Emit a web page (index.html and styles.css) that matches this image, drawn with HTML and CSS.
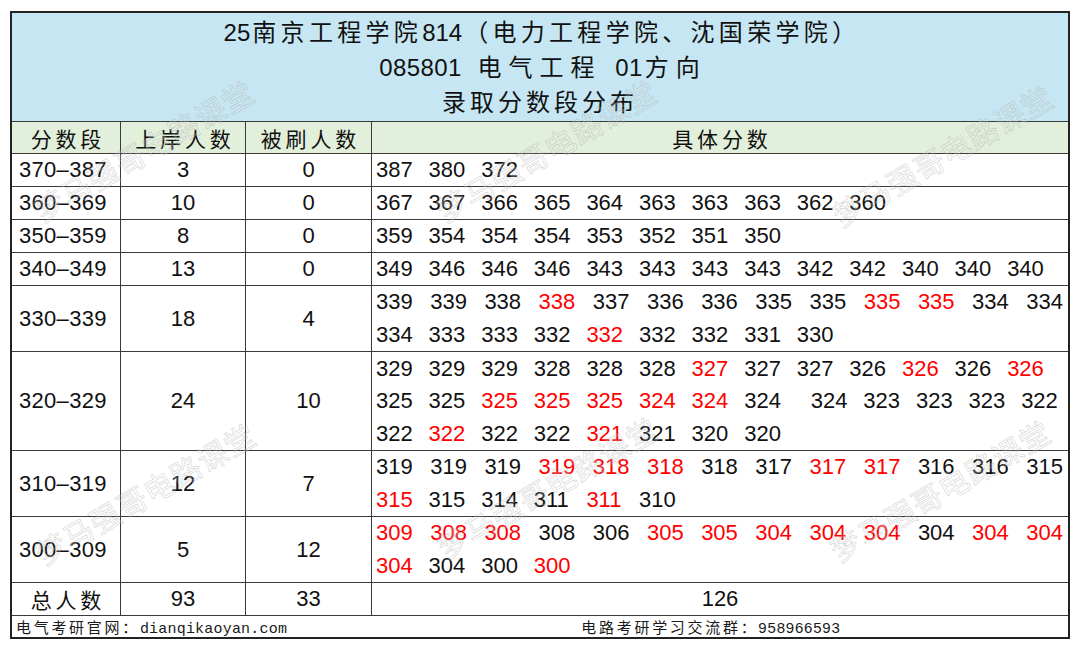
FILE: index.html
```html
<!DOCTYPE html>
<html lang="zh">
<head>
<meta charset="utf-8">
<title>录取分数段分布</title>
<link rel="stylesheet" href="styles.css">
</head>
<body>
<div class="page">
  <div class="sheet">
    <div class="cell title">
      <div class="t1"><span class="d">25</span>南京工程学院<span class="d">814</span>（电力工程学院、沈国荣学院）</div>
      <div class="t2"><span class="d">085801</span> 电气工程 <span class="d">01</span>方向</div>
      <div class="t3">录取分数段分布</div>
    </div>

    <div class="cell hd">分数段</div>
    <div class="cell hd">上岸人数</div>
    <div class="cell hd">被刷人数</div>
    <div class="cell hd">具体分数</div>

    <div class="cell rng">370–387</div>
    <div class="cell ctr">3</div>
    <div class="cell ctr">0</div>
    <div class="cell nums">
      <div class="ln"><span>387</span><span>380</span><span>372</span></div>
    </div>

    <div class="cell rng">360–369</div>
    <div class="cell ctr">10</div>
    <div class="cell ctr">0</div>
    <div class="cell nums">
      <div class="ln"><span>367</span><span>367</span><span>366</span><span>365</span><span>364</span><span>363</span><span>363</span><span>363</span><span>362</span><span>360</span></div>
    </div>

    <div class="cell rng">350–359</div>
    <div class="cell ctr">8</div>
    <div class="cell ctr">0</div>
    <div class="cell nums">
      <div class="ln"><span>359</span><span>354</span><span>354</span><span>354</span><span>353</span><span>352</span><span>351</span><span>350</span></div>
    </div>

    <div class="cell rng">340–349</div>
    <div class="cell ctr">13</div>
    <div class="cell ctr">0</div>
    <div class="cell nums">
      <div class="ln"><span>349</span><span>346</span><span>346</span><span>346</span><span>343</span><span>343</span><span>343</span><span>343</span><span>342</span><span>342</span><span>340</span><span>340</span><span>340</span></div>
    </div>

    <div class="cell rng">330–339</div>
    <div class="cell ctr">18</div>
    <div class="cell ctr">4</div>
    <div class="cell nums">
      <div class="ln w"><span>339</span><span>339</span><span>338</span><span class="r">338</span><span>337</span><span>336</span><span>336</span><span>335</span><span>335</span><span class="r">335</span><span class="r">335</span><span>334</span><span>334</span></div>
      <div class="ln"><span>334</span><span>333</span><span>333</span><span>332</span><span class="r">332</span><span>332</span><span>332</span><span>331</span><span>330</span></div>
    </div>

    <div class="cell rng">320–329</div>
    <div class="cell ctr">24</div>
    <div class="cell ctr">10</div>
    <div class="cell nums">
      <div class="ln"><span>329</span><span>329</span><span>329</span><span>328</span><span>328</span><span>328</span><span class="r">327</span><span>327</span><span>327</span><span>326</span><span class="r">326</span><span>326</span><span class="r">326</span></div>
      <div class="ln"><span>325</span><span>325</span><span class="r">325</span><span class="r">325</span><span class="r">325</span><span class="r">324</span><span class="r">324</span><span>324</span><span class="xs">324</span><span>323</span><span>323</span><span>323</span><span>322</span></div>
      <div class="ln"><span>322</span><span class="r">322</span><span>322</span><span>322</span><span class="r">321</span><span>321</span><span>320</span><span>320</span></div>
    </div>

    <div class="cell rng">310–319</div>
    <div class="cell ctr">12</div>
    <div class="cell ctr">7</div>
    <div class="cell nums">
      <div class="ln w"><span>319</span><span>319</span><span>319</span><span class="r">319</span><span class="r">318</span><span class="r">318</span><span>318</span><span>317</span><span class="r">317</span><span class="r">317</span><span>316</span><span>316</span><span>315</span></div>
      <div class="ln"><span class="r">315</span><span>315</span><span>314</span><span>311</span><span class="r">311</span><span>310</span></div>
    </div>

    <div class="cell rng">300–309</div>
    <div class="cell ctr">5</div>
    <div class="cell ctr">12</div>
    <div class="cell nums">
      <div class="ln w"><span class="r">309</span><span class="r">308</span><span class="r">308</span><span>308</span><span>306</span><span class="r">305</span><span class="r">305</span><span class="r">304</span><span class="r">304</span><span class="r">304</span><span>304</span><span class="r">304</span><span class="r">304</span></div>
      <div class="ln"><span class="r">304</span><span>304</span><span>300</span><span class="r">300</span></div>
    </div>

    <div class="cell hdw">总人数</div>
    <div class="cell ctr">93</div>
    <div class="cell ctr">33</div>
    <div class="cell ctr">126</div>

    <div class="cell foot">
      <div class="fl"><span class="fc">电气考研官网：</span><span class="fm">dianqikaoyan.com</span></div>
      <div class="fr"><span class="fc">电路考研学习交流群：</span><span class="fd">958966593</span></div>
    </div>
  </div>

  <div class="wm-layer" aria-hidden="true">
    <span class="wm wm1">梦马强哥电路课堂</span>
    <span class="wm wm2">梦马强哥电路课堂</span>
    <span class="wm wm3">梦马强哥电路课堂</span>
    <span class="wm wm4">梦马强哥电路课堂</span>
    <span class="wm wm5">梦马强哥电路课堂</span>
    <span class="wm wm6">梦马强哥电路课堂</span>
  </div>
</div>
</body>
</html>
```

FILE: styles.css
```css
html, body {
  margin: 0;
  padding: 0;
  background: #ffffff;
}

.page {
  position: relative;
  width: 1080px;
  height: 649px;
  overflow: hidden;
}

.sheet {
  display: grid;
  grid-template-columns: 108px 124px 125px 696px;
  grid-template-rows: 108px 31px 32px 32px 32px 32px 65px 98px 65px 65px 32px 21px;
  gap: 1px;
  background: #3a3a3a;
  border: 2px solid #222222;
  margin: 11px 0 0 10px;
  width: max-content;
  font-family: "Liberation Sans", "Noto Sans CJK SC", sans-serif;
  color: #111111;
}

.cell {
  background: #ffffff;
  display: flex;
  align-items: center;
  min-width: 0;
}

/* title block */
.title {
  grid-column: 1 / -1;
  background: #c5e6f2;
  flex-direction: column;
  justify-content: center;
  align-items: center;
  font-size: 24px;
  line-height: 35px;
  white-space: nowrap;
}
.title .d {
  letter-spacing: 0;
  margin-right: 2px;
}
.t1 {
  letter-spacing: 4.3px;
  padding-left: 4px;
}
.t2 {
  letter-spacing: 7px;
  padding-left: 6px;
}
.t2 .d {
  letter-spacing: 0.4px;
}
.t3 {
  letter-spacing: 4px;
  padding-left: 0;
}

/* column headers */
.hd,
.hdw {
  justify-content: center;
  font-family: "Noto Sans CJK SC", sans-serif;
  font-size: 21px;
  letter-spacing: 3.8px;
  padding-left: 3.8px;
}
.hd {
  background: #e2efda;
}

/* data cells */
.rng {
  padding-left: 7px;
  font-size: 22px;
  letter-spacing: 0.3px;
}
.ctr {
  justify-content: center;
  font-size: 22px;
}
.nums {
  flex-direction: column;
  align-items: stretch;
  justify-content: center;
  padding-left: 4px;
  font-size: 22px;
}
.ln {
  display: flex;
  align-items: center;
  height: 32.5px;
  white-space: nowrap;
}
.ln span {
  flex: none;
  width: 52.6px;
}
.ln.w span {
  width: 54.2px;
}
.ln .xs {
  margin-left: 14px;
}
.r {
  color: #ff0000;
}

/* footer */
.foot {
  grid-column: 1 / -1;
  font-size: 15px;
  color: #1a1a1a;
  white-space: nowrap;
}
.fl {
  width: 356px;
  padding-left: 4px;
}
.fr {
  flex: 1;
  text-align: center;
  padding-right: 18px;
}
.fc {
  font-family: "Noto Sans CJK SC", sans-serif;
  letter-spacing: 2.7px;
}
.fm {
  font-family: "Liberation Mono", monospace;
  letter-spacing: 0.2px;
}
.fd {
  font-family: "Liberation Sans", sans-serif;
  letter-spacing: 0.8px;
}

/* watermark overlay */
.wm-layer {
  position: absolute;
  inset: 0;
  pointer-events: none;
}
.wm {
  position: absolute;
  font-family: "Noto Sans CJK SC", sans-serif;
  font-size: 30px;
  letter-spacing: 1px;
  white-space: nowrap;
  color: rgba(255, 255, 255, 0.2);
  -webkit-text-stroke: 0.8px rgba(140, 140, 140, 0.32);
  transform: translate(-50%, -50%) rotate(-30deg);
}
.wm1 { left: 143px; top: 150px; }
.wm2 { left: 546px; top: 150px; }
.wm3 { left: 942px; top: 155px; }
.wm4 { left: 145px; top: 493px; }
.wm5 { left: 547px; top: 487px; }
.wm6 { left: 940px; top: 490px; }
```
